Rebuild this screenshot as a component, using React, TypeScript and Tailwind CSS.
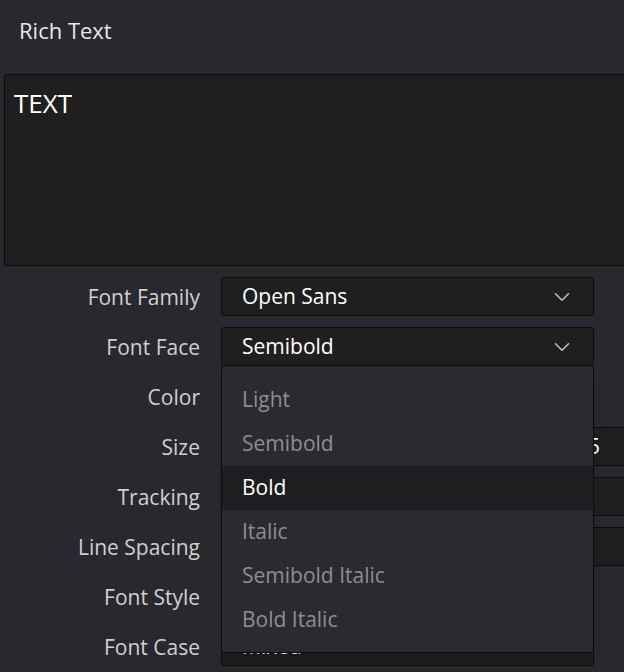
import { ChevronDown } from "lucide-react";

const rows = [
  { label: "Font Family", value: "Open Sans", select: true, full: false },
  { label: "Font Face", value: "Semibold", select: true, full: false },
  { label: "Color", value: "", select: false, full: false, none: true },
  { label: "Size", value: "5", select: false, full: true },
  { label: "Tracking", value: "", select: false, full: true },
  { label: "Line Spacing", value: "", select: false, full: true },
  { label: "Font Style", value: "", select: false, full: false, none: true },
  { label: "Font Case", value: "Mixed", select: true, full: false },
];

const options = ["Light", "Semibold", "Bold", "Italic", "Semibold Italic", "Bold Italic"];

export default function App() {
  return (
    <div
      className="w-[624px] h-[672px] overflow-hidden bg-[#28282e] font-medium text-[#e6e6e6]"
      style={{ fontFamily: '"Open Sans", sans-serif' }}
    >
      <div className="h-[74px] pl-[19px] pt-[14px] text-[22px] text-[#e8e8e8]">Rich Text</div>
      <div className="ml-[4px] mr-[-10px] h-[192px] rounded-[3px] border border-[#0c0c0c] bg-[#1f1f1f] px-[9px] pt-[12px] text-[26px] leading-[32px] text-white">
        TEXT
      </div>
      <div className="relative mt-[11px]">
        {rows.map((r) => (
          <div key={r.label} className="flex h-[50px] items-start">
            <div className="w-[200px] shrink-0 pt-[6px] text-right text-[21px] leading-[28px] text-[#d0d0d0]">{r.label}</div>
            {!r.none && (
              <div
                className={`ml-[21px] flex h-[39px] shrink-0 items-center justify-between rounded-[3px] border border-[#0c0c0c] bg-[#1f1f1f] pl-[20px] pr-[18px] text-[21px] text-white ${
                  r.full ? "w-[420px] justify-end" : "w-[373px]"
                }`}
              >
                {r.full ? <span className="mr-[22px]">{r.value}</span> : <span>{r.value}</span>}
                {r.select && <ChevronDown size={26} strokeWidth={1.5} className="text-[#bdbdbd]" />}
              </div>
            )}
          </div>
        ))}
        <div className="absolute left-[221px] top-[88px] w-[373px] rounded-[3px] border border-[#0c0c0c] bg-[#2a2a30] pt-[12px] pb-[10px] shadow-lg">
          {options.map((o) => (
            <div
              key={o}
              className={`flex h-[44px] items-center pl-[20px] text-[21px] ${
                o === "Bold" ? "bg-[#1e1e20] text-white" : "text-[#8e8e92]"
              }`}
            >
              {o}
            </div>
          ))}
        </div>
      </div>
    </div>
  );
}
